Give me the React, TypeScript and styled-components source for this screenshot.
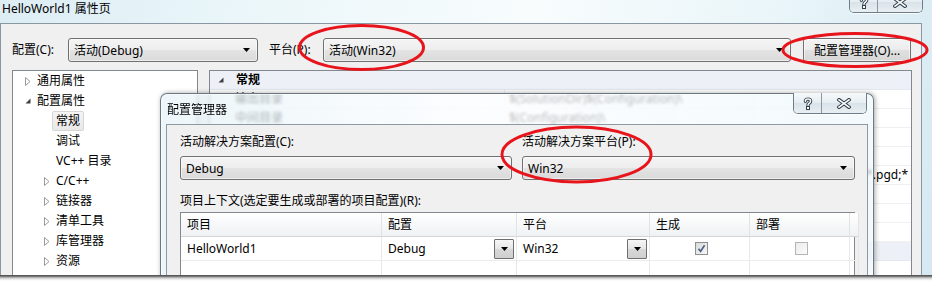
import React from 'react'
import styled, { createGlobalStyle } from 'styled-components'

// ----- Types -----

type Expander = 'open' | 'closed' | undefined

interface TreeItem {
  label: string
  level: number
  expander?: Expander
  selected?: boolean
}

interface PropRow {
  category?: boolean
  name?: string
  value?: string
  alignEnd?: boolean
}

// ----- Data -----

const treeItems: TreeItem[] = [
  { label: '通用属性', level: 0, expander: 'closed' },
  { label: '配置属性', level: 0, expander: 'open' },
  { label: '常规', level: 1, selected: true },
  { label: '调试', level: 1 },
  { label: 'VC++ 目录', level: 1 },
  { label: 'C/C++', level: 1, expander: 'closed' },
  { label: '链接器', level: 1, expander: 'closed' },
  { label: '清单工具', level: 1, expander: 'closed' },
  { label: '库管理器', level: 1, expander: 'closed' },
  { label: '资源', level: 1, expander: 'closed' },
]

// rows sitting fully under the dialog are left blank, only what shows is filled in
const propRows: PropRow[] = [
  { category: true, name: '常规' },
  { name: '输出目录', value: '$(SolutionDir)$(Configuration)\\' },
  { name: '中间目录', value: '$(Configuration)\\' },
  {},
  {},
  { value: '*.tlh;*.tmp;*.rsp;*.pgc;*.pgd;*', alignEnd: true },
  {},
  {},
  {},
  { category: true },
]

const columns = ['项目', '配置', '平台', '生成', '部署', '']

// ----- Styles -----

const GlobalStyle = createGlobalStyle`
  html, body {
    margin: 0;
    padding: 0;
    background: #fff;
  }
  body {
    font-family: "Noto Sans", "Noto Sans CJK SC", sans-serif;
    font-size: 12px;
    color: #000;
  }
  * {
    box-sizing: border-box;
  }
`

const Page = styled.div`
  position: relative;
  display: flex;
  flex-direction: column;
  width: 932px;
  height: 281px;
  overflow: hidden;
`

const MainWindow = styled.div`
  position: relative;
  display: flex;
  flex-direction: column;
  height: 275px;
  flex: none;
  overflow: hidden;
  background: linear-gradient(100deg, #dcedf4 0%, #ecf7fa 28%, #f8fcfd 55%, #e9f5f9 80%, #d6e9f2 100%);
`

const BottomEdge = styled.div`
  flex: 1;
  background: linear-gradient(#474747 0px, #7a7a7a 1.5px, #cdcdcd 3px, #f6f6f6 5px, #fff 6px);
`

const TitleBar = styled.div`
  display: flex;
  flex: none;
  justify-content: space-between;
  align-items: flex-start;
  height: 23px;
  padding: 0 9px 0 2px;
`

const WindowTitle = styled.div<{ $top?: number }>`
  margin-top: ${p => p.$top ?? 0}px;
  line-height: 18px;
  white-space: nowrap;
`

const Caption = styled.div<{ $top: number; $right?: number }>`
  display: flex;
  height: 21px;
  margin-top: ${p => p.$top}px;
  margin-right: ${p => p.$right ?? 0}px;
  border: 1px solid #6e7d89;
  border-top: none;
  border-radius: 0 0 5px 5px;
  overflow: hidden;
  box-shadow: 0 1px 0 rgba(255, 255, 255, 0.8);
`

const CaptionButton = styled.div<{ $w: number }>`
  display: flex;
  align-items: center;
  justify-content: center;
  width: ${p => p.$w}px;
  background: linear-gradient(#f6f9fb, #e6edf1 50%, #d9e2e8 50%, #e8eff3);
  & + & {
    border-left: 1px solid #8a98a3;
  }
`

const Client = styled.div`
  display: flex;
  flex-direction: column;
  flex: 1;
  min-height: 0;
  margin-right: 10px;
  padding: 14px 9px 0 11px;
  border: 1px solid #8897a2;
  border-bottom: none;
  background: #f0f0f0;
`

const ToolbarRow = styled.div`
  display: flex;
  align-items: center;
  height: 24px;
  flex: none;
`

const FieldLabel = styled.div<{ $w: number; $gap?: number }>`
  width: ${p => p.$w}px;
  margin-left: ${p => p.$gap ?? 0}px;
  line-height: 24px;
  white-space: nowrap;
`

const Combo = styled.div<{ $w?: number }>`
  display: flex;
  align-items: center;
  justify-content: space-between;
  width: ${p => (p.$w ? `${p.$w}px` : '100%')};
  height: 24px;
  padding: 0 7px 0 5px;
  border: 1px solid #707070;
  border-radius: 3px;
  background: linear-gradient(#f4f4f4 0%, #eeeeee 48%, #e3e3e3 52%, #dadada 100%);
  box-shadow: inset 0 0 0 1px rgba(255, 255, 255, 0.55);
  white-space: nowrap;
`

const PushButton = styled.div<{ $w: number; $gap: number }>`
  display: flex;
  align-items: center;
  justify-content: center;
  width: ${p => p.$w}px;
  height: 24px;
  margin-left: ${p => p.$gap}px;
  border: 1px solid #707070;
  border-radius: 3px;
  background: linear-gradient(#f4f4f4 0%, #ececec 48%, #e0e0e0 52%, #d6d6d6 100%);
  box-shadow: inset 0 0 0 1px rgba(255, 255, 255, 0.6);
  white-space: nowrap;
`

const Panels = styled.div`
  display: flex;
  gap: 11px;
  flex: 1;
  min-height: 0;
  margin-top: 8px;
`

const Tree = styled.div`
  width: 186px;
  flex: none;
  border: 1px solid #828790;
  border-bottom: none;
  background: #fff;
`

const TreeRow = styled.div<{ $level: number }>`
  display: flex;
  align-items: center;
  height: 20px;
  padding-left: ${p => (p.$level === 0 ? 12 : 31)}px;
  white-space: nowrap;
`

const ExpanderBox = styled.div`
  display: flex;
  align-items: center;
  width: 12px;
  height: 20px;
`

const TreeLabel = styled.span<{ $selected?: boolean }>`
  line-height: 18px;
  ${p =>
    p.$selected &&
    `
    margin-left: -4px;
    padding: 0 3px;
    border: 1px solid #d6d6d6;
    border-radius: 2px;
    background: linear-gradient(#f5f5f5, #e8e8e8);
  `}
`

const PropGrid = styled.div`
  display: flex;
  flex-direction: column;
  flex: 1;
  min-width: 0;
  border: 1px solid #828790;
  border-bottom: none;
  background: #fff;
`

const GridRow = styled.div<{ $category?: boolean }>`
  display: grid;
  grid-template-columns: ${p => (p.$category ? '1fr' : '295px 1fr')};
  height: 19px;
  flex: none;
  border-bottom: 1px solid ${p => (p.$category ? '#e4e9f0' : '#f0f0f0')};
  background: ${p => (p.$category ? '#edf1f7' : '#fff')};
`

const CategoryCell = styled.div`
  display: flex;
  align-items: center;
  padding-left: 8px;
  font-weight: 700;
  line-height: 18px;
`

const CategoryArrow = styled.div`
  width: 18px;
  display: flex;
  align-items: center;
`

const NameCell = styled.div`
  padding-left: 25px;
  border-right: 1px solid #f0f0f0;
  line-height: 18px;
  white-space: nowrap;
  overflow: hidden;
`

const ValueCell = styled.div<{ $end?: boolean }>`
  display: flex;
  justify-content: ${p => (p.$end ? 'flex-end' : 'flex-start')};
  padding: 0 3px 0 4px;
  line-height: 18px;
  white-space: nowrap;
  overflow: hidden;
`

const Dialog = styled.div`
  position: absolute;
  left: 160px;
  top: 93px;
  display: flex;
  flex-direction: column;
  width: 714px;
  height: 200px;
  padding: 0 5px;
  border: 1px solid #6b7882;
  border-bottom: none;
  border-radius: 7px 7px 0 0;
  background: linear-gradient(90deg, rgba(230, 242, 248, 0.72), rgba(251, 253, 254, 0.74) 45%, rgba(238, 247, 251, 0.72));
  backdrop-filter: blur(1.6px);
  box-shadow: inset 0 0 0 1px rgba(255, 255, 255, 0.6), 1px 0 5px rgba(0, 0, 0, 0.35);
`

const DialogTitleBar = styled.div`
  display: flex;
  flex: none;
  justify-content: space-between;
  align-items: flex-start;
  height: 30px;
  padding-left: 1px;
`

const DialogClient = styled.div`
  flex: 1;
  padding: 8px 12px 0 13px;
  border: 1px solid #8d99a3;
  border-bottom: none;
  background: #f0f0f0;
`

const SolutionFields = styled.div`
  display: grid;
  grid-template-columns: 332px 333px;
  column-gap: 10px;
`

const FieldStack = styled.div`
  display: flex;
  flex-direction: column;
  gap: 5px;
`

const StackLabel = styled.div<{ $gap?: number }>`
  margin-top: ${p => p.$gap ?? 0}px;
  line-height: 18px;
  white-space: nowrap;
`

const ContextTable = styled.div`
  display: grid;
  grid-template-columns: 201px 135px 133px 100px 100px 1fr;
  margin-top: 2px;
  border: 1px solid #828790;
  border-bottom: none;
  background: #fff;
`

const HeaderCell = styled.div`
  height: 24px;
  padding-left: 6px;
  line-height: 23px;
  border-right: 1px solid #e2e3e5;
  border-bottom: 1px solid #d5d5d5;
  background: linear-gradient(#ffffff, #f7f8f9 50%, #f0f1f3);
`

const BodyCell = styled.div<{ $center?: boolean }>`
  display: flex;
  align-items: center;
  justify-content: ${p => (p.$center ? 'center' : 'space-between')};
  height: 24px;
  padding: 0 2px 0 6px;
  border-right: 1px solid #e8e8e8;
  border-bottom: 1px solid #ececec;
  white-space: nowrap;
`

const DropButton = styled.div`
  display: flex;
  align-items: center;
  justify-content: center;
  width: 20px;
  height: 20px;
  border: 1px solid #6f6f6f;
  border-radius: 1px;
  background: linear-gradient(#f6f6f6, #e6e6e6 50%, #d8d8d8 52%, #cfcfcf);
`

const Check = styled.div<{ $checked?: boolean }>`
  display: flex;
  align-items: center;
  justify-content: center;
  width: 13px;
  height: 13px;
  border: 1px solid ${p => (p.$checked ? '#8e8f8f' : '#b5b5b5')};
  background: ${p =>
    p.$checked ? 'linear-gradient(135deg, #d9dadb, #f7f7f7)' : 'linear-gradient(135deg, #ececec, #fbfbfb)'};
`

const Annotations = styled.svg`
  position: absolute;
  left: 0;
  top: 0;
  pointer-events: none;
`

// ----- Glyphs -----

const DownArrow: React.FC = () => (
  <svg width="7" height="4" viewBox="0 0 7 4">
    <path d="M0 0H7L3.5 4Z" fill="#000" />
  </svg>
)

const ExpanderGlyph: React.FC<{ state: Expander }> = ({ state }) => {
  if (state === 'open') {
    return (
      <svg width="6" height="6" viewBox="0 0 6 6">
        <path d="M5.5 0.5V5.5H0.5Z" fill="#404040" />
      </svg>
    )
  }
  if (state === 'closed') {
    return (
      <svg width="6" height="9" viewBox="0 0 6 9">
        <path d="M0.5 0.5L5 4.5L0.5 8.5Z" fill="#fff" stroke="#9a9a9a" />
      </svg>
    )
  }
  return null
}

const HelpGlyph: React.FC = () => (
  <svg width="10" height="13" viewBox="0 0 10 13">
    <path d="M2.4 4.2C2.4 1.4 7.6 1.4 7.6 4.2C7.6 6.3 5 6.1 5 8.2" fill="none" stroke="#33434e" strokeWidth="3.4" strokeLinecap="round" />
    <path d="M2.4 4.2C2.4 1.4 7.6 1.4 7.6 4.2C7.6 6.3 5 6.1 5 8.2" fill="none" stroke="#fff" strokeWidth="1.5" strokeLinecap="round" />
    <rect x="3.5" y="9.5" width="3" height="3" fill="#fff" stroke="#33434e" />
  </svg>
)

const CloseGlyph: React.FC = () => (
  <svg width="14" height="11" viewBox="0 0 14 11">
    <path d="M2 1.8L12 9.2M12 1.8L2 9.2" stroke="#33434e" strokeWidth="3.6" strokeLinecap="square" />
    <path d="M2 1.8L12 9.2M12 1.8L2 9.2" stroke="#fff" strokeWidth="1.6" strokeLinecap="square" />
  </svg>
)

const CheckMark: React.FC = () => (
  <svg width="9" height="9" viewBox="0 0 9 9">
    <path d="M1.5 4.8L3.6 7.3L7.6 1.2" fill="none" stroke="#4a5f88" strokeWidth="1.6" />
  </svg>
)

const CaptionButtons: React.FC<{ top: number; right?: number }> = ({ top, right }) => (
  <Caption $top={top} $right={right}>
    <CaptionButton $w={27}>
      <HelpGlyph />
    </CaptionButton>
    <CaptionButton $w={45}>
      <CloseGlyph />
    </CaptionButton>
  </Caption>
)

// ----- Component Logic -----

const App: React.FC = () => {
  return (
    <Page>
      <GlobalStyle />
      <MainWindow>
        <TitleBar>
          <WindowTitle>HelloWorld1 属性页</WindowTitle>
          <CaptionButtons top={-8} />
        </TitleBar>
        <Client>
          <ToolbarRow>
            <FieldLabel $w={56}>配置(C):</FieldLabel>
            <Combo $w={190}>
              <span>活动(Debug)</span>
              <DownArrow />
            </Combo>
            <FieldLabel $w={54} $gap={11}>
              平台(P):
            </FieldLabel>
            <Combo $w={468}>
              <span>活动(Win32)</span>
              <DownArrow />
            </Combo>
            <PushButton $w={108} $gap={12}>
              配置管理器(O)...
            </PushButton>
          </ToolbarRow>
          <Panels>
            <Tree>
              {treeItems.map(item => (
                <TreeRow key={item.label} $level={item.level}>
                  <ExpanderBox>
                    <ExpanderGlyph state={item.expander} />
                  </ExpanderBox>
                  <TreeLabel $selected={item.selected}>{item.label}</TreeLabel>
                </TreeRow>
              ))}
            </Tree>
            <PropGrid>
              {propRows.map((row, i) =>
                row.category ? (
                  <GridRow key={i} $category>
                    {row.name && (
                      <CategoryCell>
                        <CategoryArrow>
                          <ExpanderGlyph state="open" />
                        </CategoryArrow>
                        {row.name}
                      </CategoryCell>
                    )}
                  </GridRow>
                ) : (
                  <GridRow key={i}>
                    <NameCell>{row.name}</NameCell>
                    <ValueCell $end={row.alignEnd}>
                      {row.value && <span>{row.value}</span>}
                    </ValueCell>
                  </GridRow>
                ),
              )}
            </PropGrid>
          </Panels>
        </Client>

        <Dialog>
          <DialogTitleBar>
            <WindowTitle $top={7}>配置管理器</WindowTitle>
            <CaptionButtons top={-1} right={1} />
          </DialogTitleBar>
          <DialogClient>
            <SolutionFields>
              <FieldStack>
                <StackLabel>活动解决方案配置(C):</StackLabel>
                <Combo>
                  <span>Debug</span>
                  <DownArrow />
                </Combo>
              </FieldStack>
              <FieldStack>
                <StackLabel>活动解决方案平台(P):</StackLabel>
                <Combo>
                  <span>Win32</span>
                  <DownArrow />
                </Combo>
              </FieldStack>
            </SolutionFields>
            <StackLabel $gap={12}>项目上下文(选定要生成或部署的项目配置)(R):</StackLabel>
            <ContextTable>
              {columns.map((c, i) => (
                <HeaderCell key={i}>{c}</HeaderCell>
              ))}
              <BodyCell>HelloWorld1</BodyCell>
              <BodyCell>
                <span>Debug</span>
                <DropButton>
                  <DownArrow />
                </DropButton>
              </BodyCell>
              <BodyCell>
                <span>Win32</span>
                <DropButton>
                  <DownArrow />
                </DropButton>
              </BodyCell>
              <BodyCell $center>
                <Check $checked>
                  <CheckMark />
                </Check>
              </BodyCell>
              <BodyCell $center>
                <Check />
              </BodyCell>
              <BodyCell />
              {columns.map((_, i) => (
                <BodyCell key={`e${i}`} />
              ))}
            </ContextTable>
          </DialogClient>
        </Dialog>
      </MainWindow>
      <BottomEdge />

      <Annotations width="932" height="281" viewBox="0 0 932 281">
        <ellipse cx="361.5" cy="47.5" rx="62" ry="22" fill="none" stroke="#e8141b" strokeWidth="3" />
        <ellipse cx="855" cy="50" rx="72" ry="16.5" fill="none" stroke="#e8141b" strokeWidth="3" />
        <ellipse cx="576.5" cy="154.5" rx="74.5" ry="27.5" fill="none" stroke="#e8141b" strokeWidth="3" />
      </Annotations>
    </Page>
  )
}

export default App
